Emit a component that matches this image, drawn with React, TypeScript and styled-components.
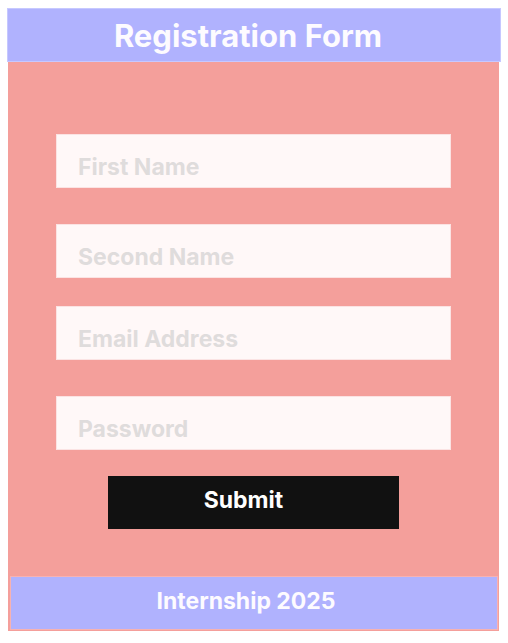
import React from "react";
import styled, { createGlobalStyle } from "styled-components";

const Global = createGlobalStyle`
  html, body { margin: 0; padding: 0; background: #ffffff; }
  body { font-family: Inter, "Noto Sans", sans-serif; }
  * { box-sizing: border-box; }
`;

const Page = styled.div`
  padding: 8px 9px 0 8px;
  width: 508px;
`;

const Card = styled.div`
  width: 491px;
  background: #f49f9b;
  display: flex;
  flex-direction: column;
  padding-bottom: 1px;
`;

const Header = styled.header`
  margin: 0 -2px 0 -1px;
  height: 54px;
  background: #b0b2fe;
  border: 1px solid #c6c8ff;
  display: flex;
  align-items: center;
  justify-content: center;
  padding-right: 12px;
`;

const Title = styled.h1`
  margin: 0;
  font-size: 31px;
  font-weight: 700;
  color: #fdfbff;
  letter-spacing: 0;
`;

const Form = styled.form`
  display: flex;
  flex-direction: column;
  align-items: center;
  padding: 72px 0 47px;
`;

const Field = styled.input<{ $gap: number }>`
  width: 395px;
  height: 54px;
  margin-bottom: ${(p) => p.$gap}px;
  background: #fff8f8;
  border: 1px solid #fbe3e3;
  outline: none;
  padding: 12px 0 0 21px;
  font-family: Inter, "Noto Sans", sans-serif;
  font-size: 23px;
  font-weight: 700;
  color: #333;
  &::placeholder {
    color: #dfdcdc;
  }
`;

const SubmitButton = styled.button`
  width: 291px;
  height: 53px;
  background: #111111;
  border: none;
  color: #ffffff;
  font-family: Inter, "Noto Sans", sans-serif;
  font-size: 23px;
  font-weight: 700;
  padding: 0 20px 6px 0;
  cursor: pointer;
`;

const Footer = styled.footer`
  margin: 0 1px 0 2px;
  height: 54px;
  background: #b0b2fe;
  border: 1px solid #f7b2b2;
  display: flex;
  align-items: center;
  justify-content: center;
  padding: 0 16px 4px 0;
`;

const FooterText = styled.span`
  font-size: 23px;
  font-weight: 700;
  color: #fdfbff;
`;

export default function App() {
  return (
    <>
      <Global />
      <Page>
        <Card>
          <Header>
            <Title>Registration Form</Title>
          </Header>
          <Form onSubmit={(e) => e.preventDefault()}>
            <Field $gap={36} placeholder="First Name" />
            <Field $gap={28} placeholder="Second Name" />
            <Field $gap={36} placeholder="Email Address" />
            <Field $gap={26} type="password" placeholder="Password" />
            <SubmitButton type="submit">Submit</SubmitButton>
          </Form>
          <Footer>
            <FooterText>Internship 2025</FooterText>
          </Footer>
        </Card>
      </Page>
    </>
  );
}
